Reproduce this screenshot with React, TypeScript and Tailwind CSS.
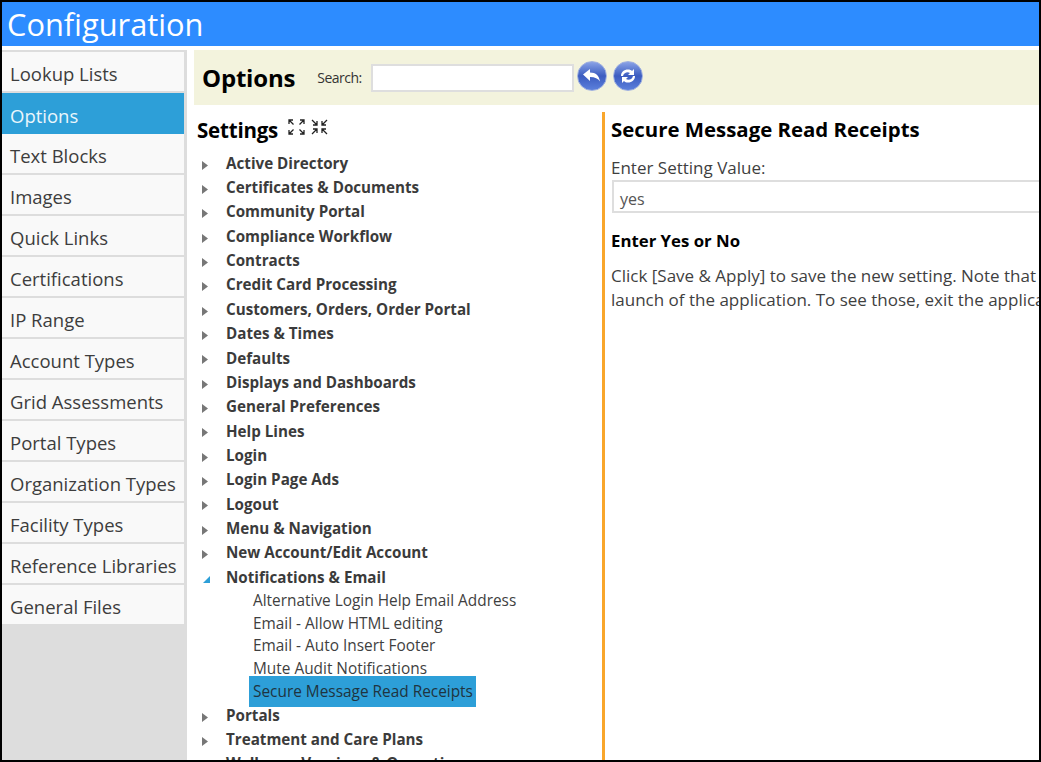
const sideItems = [
  "Lookup Lists",
  "Options",
  "Text Blocks",
  "Images",
  "Quick Links",
  "Certifications",
  "IP Range",
  "Account Types",
  "Grid Assessments",
  "Portal Types",
  "Organization Types",
  "Facility Types",
  "Reference Libraries",
  "General Files",
];

const groupsBefore = [
  "Active Directory",
  "Certificates & Documents",
  "Community Portal",
  "Compliance Workflow",
  "Contracts",
  "Credit Card Processing",
  "Customers, Orders, Order Portal",
  "Dates & Times",
  "Defaults",
  "Displays and Dashboards",
  "General Preferences",
  "Help Lines",
  "Login",
  "Login Page Ads",
  "Logout",
  "Menu & Navigation",
  "New Account/Edit Account",
];

const children = [
  "Alternative Login Help Email Address",
  "Email - Allow HTML editing",
  "Email - Auto Insert Footer",
  "Mute Audit Notifications",
];

const groupsAfter = ["Portals", "Treatment and Care Plans", "Wellness, Vaccines & Operations"];

function TreeGroup({ label, open }: { label: string; open?: boolean }) {
  return (
    <div className="flex h-[24.35px] items-center">
      <span className="flex w-[29px] shrink-0 items-center pl-[5px] pt-[4px]">
        {open ? (
          <svg width="9" height="9" viewBox="0 0 9 9">
            <polygon points="8,1 8,8 1,8" fill="#2d9fd8" />
          </svg>
        ) : (
          <svg width="6" height="9" viewBox="0 0 6 9">
            <polygon points="0,0 6,4.5 0,9" fill="#777777" />
          </svg>
        )}
      </span>
      <span className="whitespace-nowrap text-[15.2px] font-bold text-[#3b3b3b]">{label}</span>
    </div>
  );
}

function ExpandIcon() {
  return (
    <svg width="17" height="16" viewBox="0 0 17 16" fill="none" stroke="#222222" strokeWidth="1.3">
      <path d="M1 5V1h4M1 1l4.500 4.500M16 5V1h-4M16 1l-4.500 4.500M1 11v4h4M1 15l4.500-4.500M16 11v4h-4M16 15l-4.500-4.500" />
    </svg>
  );
}

function CollapseIcon() {
  return (
    <svg width="17" height="16" viewBox="0 0 17 16" fill="none" stroke="#222222" strokeWidth="1.3">
      <path d="M2 6h4V2M6 6 1 1M15 6h-4V2M11 6l5-5M2 10h4v4M6 10l-5 5M15 10h-4v4M11 10l5 5" />
    </svg>
  );
}

function RoundButton({ children }: { children: React.ReactNode }) {
  return (
    <span className="flex h-[30px] w-[30px] items-center justify-center rounded-full border border-[#9fb0e0] bg-gradient-to-b from-[#8aa2e6] via-[#3c5cc0] to-[#5c80dc]">
      {children}
    </span>
  );
}

export default function App() {
  return (
    <div className="h-[762px] w-[1041px] overflow-hidden border-2 border-black bg-white font-['Open_Sans','Noto_Sans',sans-serif]">
      <header className="flex h-[44px] items-center bg-[#2d8cff] pl-[5px]">
        <h1 className="text-[30.8px] leading-none text-white">Configuration</h1>
      </header>

      <div className="mt-[4px] flex h-[710px]">
        {/* Seitenleiste */}
        <aside className="h-full w-[185px] shrink-0 bg-[#dddddd] pr-[3px] pt-[2px]">
          {sideItems.map((item) => (
            <div
              key={item}
              className={
                item === "Options"
                  ? "flex h-[41px] items-center bg-[#2d9fd8] pl-[8px] pt-[4px] text-[18.5px] text-[#eaf6fc]"
                  : "flex h-[41px] items-center border-b-2 border-[#dddddd] bg-[#f9f9f9] pl-[8px] pt-[4px] text-[18.5px] text-[#3d3d3d]"
              }
            >
              {item}
            </div>
          ))}
        </aside>

        <main className="min-w-0 flex-1 pl-[7px]">
          <div className="flex h-[55px] items-center bg-[#f3f3dd]">
            <span className="ml-[8px] text-[24px] font-bold tracking-[-0.2px] text-black">Options</span>
            <span className="ml-[22px] text-[14px] tracking-[-0.5px] text-[#333333]">Search:</span>
            <input className="ml-[9px] h-[28px] w-[203px] border-2 border-[#dedede] bg-white" />
            <span className="mb-[4px] ml-[3px] flex gap-[6px]">
              <RoundButton>
                <svg width="20" height="16" viewBox="0 0 20 16">
                  <path d="M1 6.500 8 1v3.500c6 0 9 3 10 9-2-3-5-4.500-10-4.500V13Z" fill="#ffffff" />
                </svg>
              </RoundButton>
              <RoundButton>
                <svg width="20" height="20" viewBox="0 0 20 20" fill="#ffffff">
                  <path d="M3 10c0-4 3-6.500 7-6.500 2 0 3 .5 4 1.500L16 3v6h-6l2-2c-2-1.500-6-1-7 3Z" />
                  <path d="M17 10c0 4-3 6.500-7 6.500-2 0-3-.5-4-1.500L4 17v-6h6l-2 2c2 1.500 6 1 7-3Z" />
                </svg>
              </RoundButton>
            </span>
          </div>

          <div className="flex">
            {/* Einstellungsbaum */}
            <section className="h-[655px] w-[408px] shrink-0 overflow-hidden pl-[3px]">
              <div className="flex h-[46px] items-center pt-[4px]">
                <span className="text-[20.5px] font-bold tracking-[-0.2px] text-black">Settings</span>
                <span className="mb-[6px] ml-[10px] flex gap-[6px]">
                  <ExpandIcon />
                  <CollapseIcon />
                </span>
              </div>
              <div>
                {groupsBefore.map((g) => (
                  <TreeGroup key={g} label={g} />
                ))}
                <TreeGroup label="Notifications & Email" open />
                {children.map((c) => (
                  <div key={c} className="flex h-[22.7px] items-center pl-[56px] text-[15.4px] text-[#3f3f3f]">
                    {c}
                  </div>
                ))}
                <div className="relative -mb-[4px] ml-[52px] -mt-[4px] flex h-[31px] w-[227px] items-center bg-[#2d9fd8] pl-[4px] text-[15.4px] text-[#1f3440]">
                  Secure Message Read Receipts
                </div>
                {groupsAfter.map((g) => (
                  <TreeGroup key={g} label={g} />
                ))}
              </div>
            </section>

            {/* Detailbereich */}
            <section className="mt-[7px] h-[648px] min-w-0 flex-1 overflow-hidden border-l-[3px] border-[#f9a62b] pl-[6px]">
              <h2 className="mt-[2px] whitespace-nowrap text-[20.4px] font-bold text-black">Secure Message Read Receipts</h2>
              <p className="mt-[11px] text-[17px] leading-[24px] text-[#3f3f3f]">Enter Setting Value:</p>
              <div className="ml-[1px] flex h-[33px] w-[450px] items-center border-2 border-[#dedede] pl-[6px] pt-[5px] text-[16px] text-[#555555]">
                yes
              </div>
              <p className="mt-[15px] text-[16.8px] font-bold text-black">Enter Yes or No</p>
              <p className="mt-[11px] w-[900px] text-[17px] leading-[24px] text-[#3f3f3f]">
                Click [Save &amp; Apply] to save the new setting. Note that some settings will not take effect until the next
                <br />
                launch of the application. To see those, exit the application and log in again.
              </p>
            </section>
          </div>
        </main>
      </div>
    </div>
  );
}
